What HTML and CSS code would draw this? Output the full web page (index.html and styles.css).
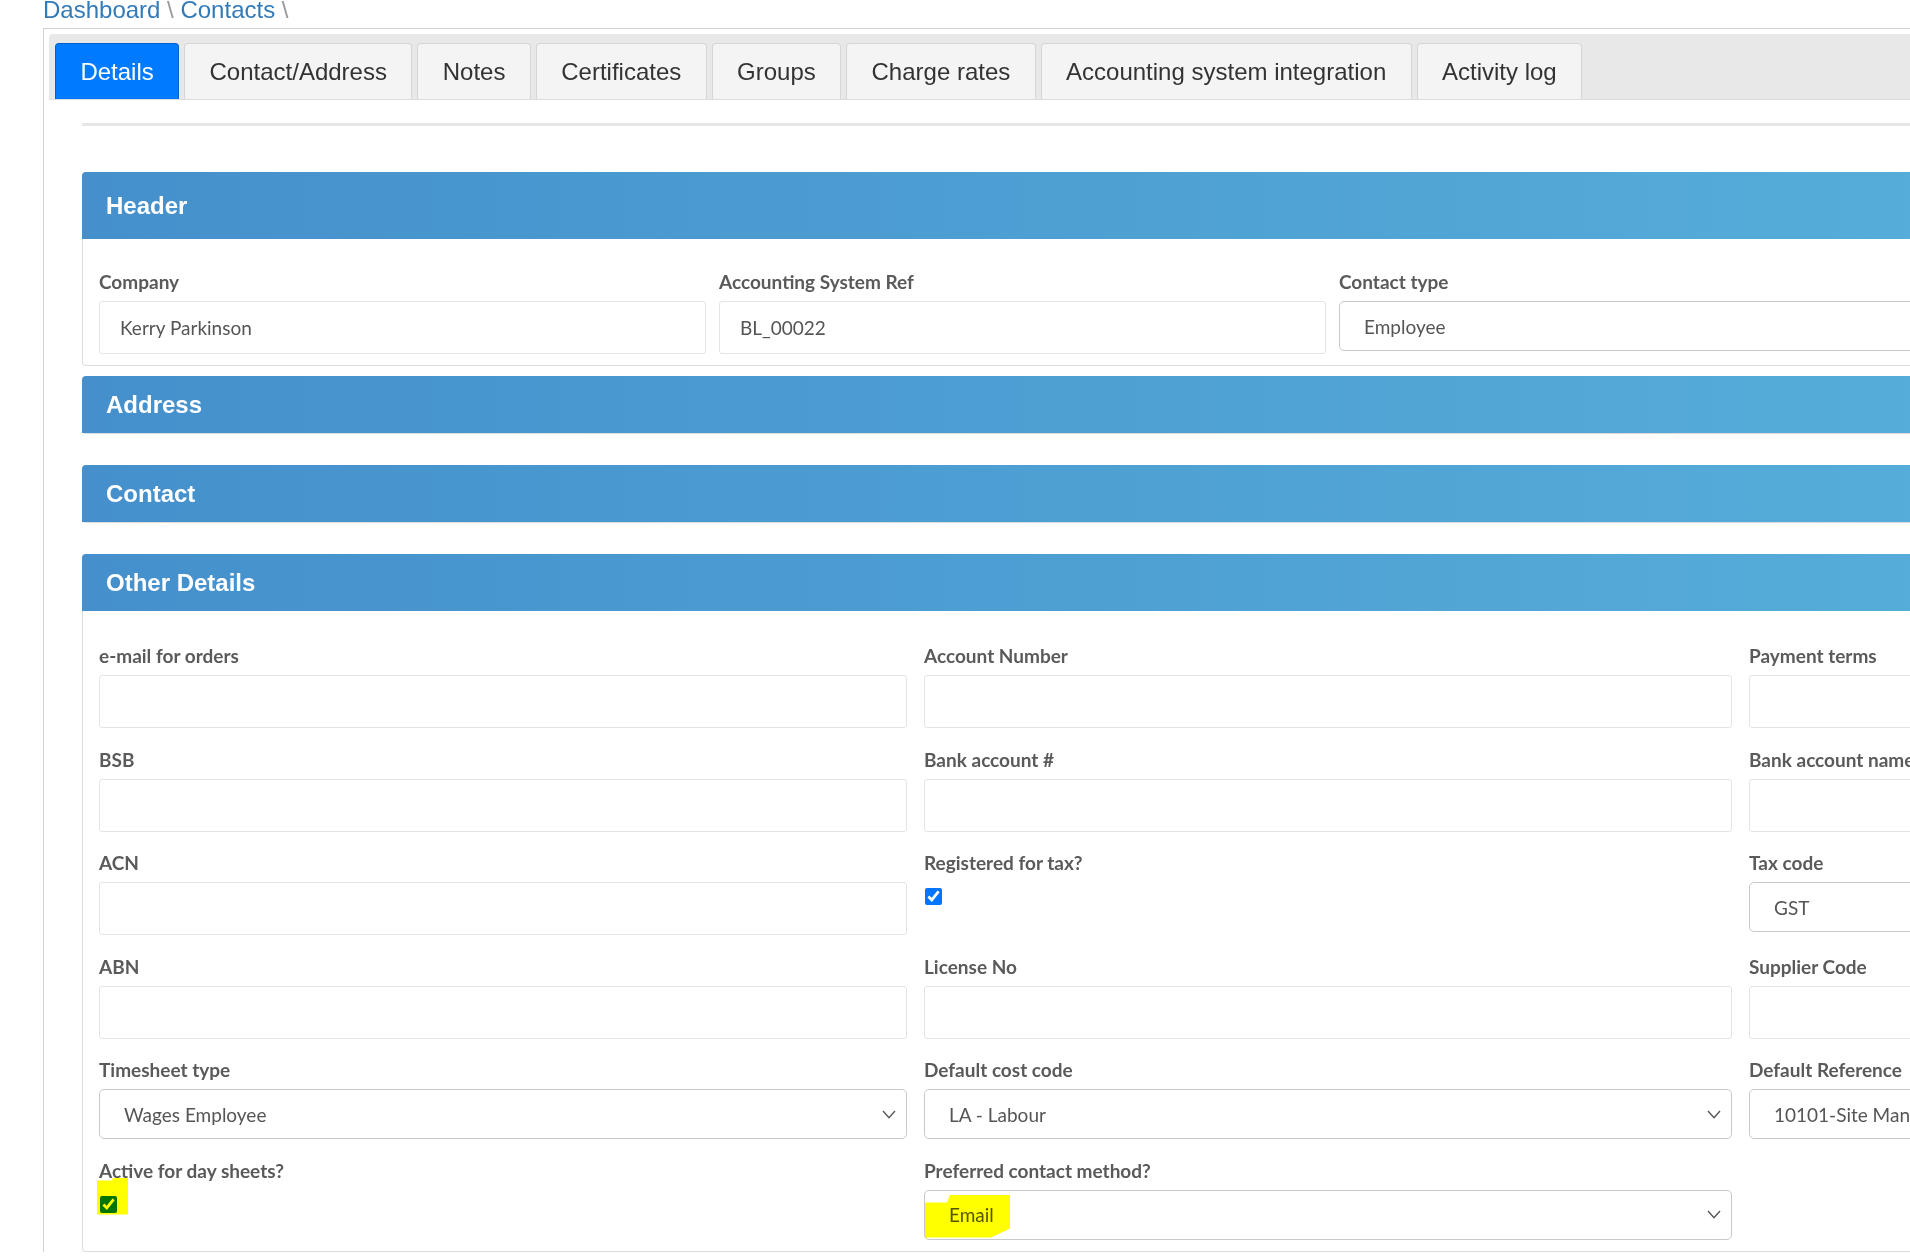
FILE: index.html
```html
<!DOCTYPE html>
<html lang="en">
<head>
    <meta charset="UTF-8">
    <meta name="viewport" content="width=device-width, initial-scale=1.0">
    <title>Contact - Kerry Parkinson</title>
    <link rel="stylesheet" href="styles.css">
</head>
<body>
    <div class="crumbs">
        <a href="#">Dashboard</a> <span class="sep">\</span> <a href="#">Contacts</a> <span class="sep">\</span>
    </div>

    <div class="page-panel">
        <ul class="tabs">
            <li class="tab active">Details</li>
            <li class="tab">Contact/Address</li>
            <li class="tab">Notes</li>
            <li class="tab">Certificates</li>
            <li class="tab">Groups</li>
            <li class="tab">Charge rates</li>
            <li class="tab">Accounting system integration</li>
            <li class="tab">Activity log</li>
        </ul>

        <div class="tab-pane">
            <!-- Header -->
            <div class="panel header-panel">
                <div class="panel-title tall">Header</div>
                <div class="panel-body">
                    <div class="grid four">
                        <div class="field">
                            <label>Company</label>
                            <input class="text" value="Kerry Parkinson" readonly>
                        </div>
                        <div class="field">
                            <label>Accounting System Ref</label>
                            <input class="text" value="BL_00022" readonly>
                        </div>
                        <div class="field">
                            <label>Contact type</label>
                            <div class="select"><span>Employee</span></div>
                        </div>
                    </div>
                </div>
            </div>

            <!-- Address -->
            <div class="panel collapsed">
                <div class="panel-title">Address</div>
            </div>

            <!-- Contact -->
            <div class="panel collapsed">
                <div class="panel-title">Contact</div>
            </div>

            <!-- Other Details -->
            <div class="panel">
                <div class="panel-title">Other Details</div>
                <div class="panel-body other-body">
                    <div class="grid three">
                        <div class="field">
                            <label>e-mail for orders</label>
                            <input class="text">
                        </div>
                        <div class="field">
                            <label>Account Number</label>
                            <input class="text">
                        </div>
                        <div class="field">
                            <label>Payment terms</label>
                            <input class="text">
                        </div>

                        <div class="field">
                            <label>BSB</label>
                            <input class="text">
                        </div>
                        <div class="field">
                            <label>Bank account #</label>
                            <input class="text">
                        </div>
                        <div class="field">
                            <label>Bank account name</label>
                            <input class="text">
                        </div>

                        <div class="field">
                            <label>ACN</label>
                            <input class="text">
                        </div>
                        <div class="field">
                            <label>Registered for tax?</label>
                            <input type="checkbox" class="check" checked>
                        </div>
                        <div class="field">
                            <label>Tax code</label>
                            <div class="select"><span>GST</span></div>
                        </div>

                        <div class="field">
                            <label>ABN</label>
                            <input class="text">
                        </div>
                        <div class="field">
                            <label>License No</label>
                            <input class="text">
                        </div>
                        <div class="field">
                            <label>Supplier Code</label>
                            <input class="text">
                        </div>

                        <div class="field">
                            <label>Timesheet type</label>
                            <div class="select">
                                <span>Wages Employee</span>
                                <svg class="chev" width="14" height="9" viewBox="0 0 14 9"><path d="M1 1l6 6.8L13 1"/></svg>
                            </div>
                        </div>
                        <div class="field">
                            <label>Default cost code</label>
                            <div class="select">
                                <span>LA - Labour</span>
                                <svg class="chev" width="14" height="9" viewBox="0 0 14 9"><path d="M1 1l6 6.8L13 1"/></svg>
                            </div>
                        </div>
                        <div class="field">
                            <label>Default Reference</label>
                            <div class="select">
                                <span>10101-Site Management</span>
                                <svg class="chev" width="14" height="9" viewBox="0 0 14 9"><path d="M1 1l6 6.8L13 1"/></svg>
                            </div>
                        </div>

                        <div class="field">
                            <label>Active for day sheets?</label>
                            <input type="checkbox" class="check" checked>
                            <span class="hl hl-check"></span>
                        </div>
                        <div class="field">
                            <label>Preferred contact method?</label>
                            <div class="select">
                                <span>Email</span>
                                <svg class="chev" width="14" height="9" viewBox="0 0 14 9"><path d="M1 1l6 6.8L13 1"/></svg>
                            </div>
                            <span class="hl hl-email"></span>
                        </div>
                    </div>
                </div>
            </div>
        </div>
    </div>
</body>
</html>
```

FILE: styles.css
```css
html, body {
    overflow: hidden;
}

body {
    margin: 0;
    font-family: "Liberation Sans", Arial, sans-serif;
    color: #333;
    background: #fff;
}

/* breadcrumb */
.crumbs {
    margin: -2px 0 0 43px;
    height: 24px;
    font-size: 24px;
    line-height: 24px;
    white-space: nowrap;
}

.crumbs a {
    color: #337ab7;
    text-decoration: none;
}

.crumbs .sep {
    color: #9a9a9a;
}

/* outer box with tabs */
.page-panel {
    margin-top: 6px;
    margin-left: 43px;
    width: 2620px;
    padding: 5px 0 0 5px;
    border-top: 1px solid #d2d2d2;
    border-left: 1px solid #d2d2d2;
}

.tabs {
    display: flex;
    gap: 5px;
    list-style: none;
    margin: 0;
    padding: 9px 6px 0;
    height: 66px;
    box-sizing: border-box;
    background: #e8e8e8;
    border-bottom: 1px solid #dcdcdc;
    border-radius: 4px 4px 0 0;
}

.tab {
    padding: 0 24.4px;
    line-height: 55px;
    font-size: 24px;
    color: #333;
    background: #f4f4f4;
    border: 1px solid #d6d6d6;
    border-bottom: none;
    border-radius: 4px 4px 0 0;
    white-space: nowrap;
}

.tab.active {
    background: #007bff;
    border-color: #0062cc;
    color: #fff;
}

.tab-pane {
    margin: 23px 33px 0;
    padding-top: 46px;
    border-top: 3px solid #e6e6e6;
}

/* section panels */
.panel {
    margin-bottom: 31px;
}

.header-panel {
    margin-bottom: 10px;
}

.panel-title {
    height: 57px;
    line-height: 57px;
    padding: 0 24px;
    font-size: 24px;
    font-weight: bold;
    color: #fff;
    background: linear-gradient(to right, #4590cc 0%, #5cb8de 100%);
    border-radius: 4px 4px 0 0;
}

.panel-title.tall {
    height: 67px;
    line-height: 67px;
}

.panel.collapsed {
    border-bottom: 1px solid #dcdcdc;
    border-radius: 4px;
}

.panel-body {
    padding: 32px 16px 11px;
    border: 1px solid #dcdcdc;
    border-top: none;
    border-radius: 0 0 4px 4px;
}

.other-body {
    padding-top: 34px;
}

.grid {
    display: grid;
    row-gap: 20.5px;
}

.grid.four {
    grid-template-columns: repeat(4, 607px);
    column-gap: 13px;
}

.grid.three {
    grid-template-columns: repeat(3, 808px);
    column-gap: 17px;
}

/* fields */
.field {
    position: relative;
}

.field label {
    display: block;
    margin-bottom: 8px;
    font-family: Lato, "Open Sans", sans-serif;
    font-weight: bold;
    font-size: 19px;
    line-height: 22px;
    color: #5a5a5a;
    white-space: nowrap;
}

.text {
    display: block;
    width: 100%;
    height: 53px;
    box-sizing: border-box;
    margin: 0;
    padding: 0 20px;
    font-family: Lato, "Open Sans", sans-serif;
    font-size: 19px;
    color: #555;
    background: #fff;
    border: 1px solid #e4e4e4;
    border-radius: 3px;
    outline: none;
}

.select {
    display: flex;
    align-items: center;
    justify-content: space-between;
    height: 50px;
    box-sizing: border-box;
    padding: 0 10px 0 24px;
    font-family: Lato, "Open Sans", sans-serif;
    font-size: 19px;
    color: #555;
    background: #fff;
    border: 1px solid #c9c9c9;
    border-radius: 5px;
    white-space: nowrap;
}

.chev path {
    fill: none;
    stroke: #555;
    stroke-width: 1.4;
}

.check {
    display: block;
    width: 17px;
    height: 17px;
    margin: 14px 0 0 1px;
    accent-color: #0075ff;
}

/* yellow marker the screenshot was annotated with */
.hl {
    position: absolute;
    background: #ffff00;
    mix-blend-mode: multiply;
}

.hl-check {
    left: -2px;
    top: 18px;
    width: 31px;
    height: 37px;
    clip-path: polygon(0 3px, 15px 3px, 16px 0, 100% 0, 100% 100%, 0 100%);
}

.hl-email {
    left: 1px;
    top: 35px;
    width: 85px;
    height: 43px;
    clip-path: polygon(0 8px, 22px 8px, 25px 0, 100% 0, 100% 34px, 66px 100%, 0 100%);
}
```
